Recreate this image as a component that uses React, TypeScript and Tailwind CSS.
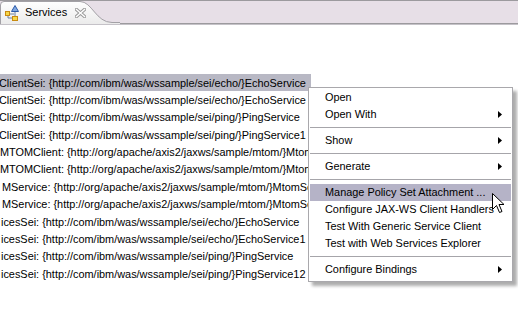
import React from 'react'

const rows = [
  { text: 'ClientSei: {http://com/ibm/was/wssample/sei/echo/}EchoService', offset: '-ml-[1px]', selected: true },
  { text: 'ClientSei: {http://com/ibm/was/wssample/sei/echo/}EchoService', offset: '-ml-[1px]' },
  { text: 'ClientSei: {http://com/ibm/was/wssample/sei/ping/}PingService', offset: '-ml-[1px]' },
  { text: 'ClientSei: {http://com/ibm/was/wssample/sei/ping/}PingService1', offset: '-ml-[1px]' },
  { text: 'MTOMClient: {http://org/apache/axis2/jaxws/sample/mtom/}MtomService', offset: 'ml-0' },
  { text: 'MTOMClient: {http://org/apache/axis2/jaxws/sample/mtom/}MtomService', offset: 'ml-0' },
  { text: 'MService: {http://org/apache/axis2/jaxws/sample/mtom/}MtomService', offset: 'ml-[2px]' },
  { text: 'MService: {http://org/apache/axis2/jaxws/sample/mtom/}MtomService', offset: 'ml-[2px]' },
  { text: 'icesSei: {http://com/ibm/was/wssample/sei/echo/}EchoService', offset: 'ml-[1px]' },
  { text: 'icesSei: {http://com/ibm/was/wssample/sei/echo/}EchoService1', offset: 'ml-[1px]' },
  { text: 'icesSei: {http://com/ibm/was/wssample/sei/ping/}PingService', offset: 'ml-[1px]' },
  { text: 'icesSei: {http://com/ibm/was/wssample/sei/ping/}PingService12', offset: 'ml-[1px]' },
]

type MenuEntry = { label: string; sub?: boolean; hover?: boolean } | 'sep'

const menu: MenuEntry[] = [
  { label: 'Open' },
  { label: 'Open With', sub: true },
  'sep',
  { label: 'Show', sub: true },
  'sep',
  { label: 'Generate', sub: true },
  'sep',
  { label: 'Manage Policy Set Attachment ...', hover: true },
  { label: 'Configure JAX-WS Client Handlers' },
  { label: 'Test With Generic Service Client' },
  { label: 'Test with Web Services Explorer' },
  'sep',
  { label: 'Configure Bindings', sub: true },
]

const ServicesIcon = () => (
  <svg width="16" height="16" viewBox="0 0 16 16" className="flex-shrink-0">
    <path d="M4 8 V13 H9 M4 9 H10 M11 4 V12" stroke="#6b7f9c" strokeWidth="1" fill="none" />
    <rect x="1.5" y="6.5" width="4" height="4" fill="#f6d84a" stroke="#c88a10" />
    <rect x="8.5" y="11.5" width="5" height="4" fill="#f6d84a" stroke="#c88a10" />
    <path d="M11 0.5 L14.5 6.5 H7.5 Z" fill="#7fa7e0" stroke="#2b59a8" />
  </svg>
)

const CloseIcon = () => (
  <svg width="11" height="10" viewBox="0 0 11 10" className="flex-shrink-0">
    <path d="M1.5 1.5 L9.5 8.5 M9.5 1.5 L1.5 8.5" stroke="#9a9a9a" strokeWidth="3.4" strokeLinecap="square" />
    <path d="M1.5 1.5 L9.5 8.5 M9.5 1.5 L1.5 8.5" stroke="#ffffff" strokeWidth="1.4" strokeLinecap="square" />
  </svg>
)

const Arrow = () => (
  <svg width="4" height="7" viewBox="0 0 4 7" className="flex-shrink-0">
    <path d="M0 0 L4 3.5 L0 7 Z" fill="#000" />
  </svg>
)

export default function App() {
  return (
    <div
      className="w-[518px] h-[317px] bg-white relative overflow-hidden text-[10.9px] text-black"
      style={{ fontFamily: '"Liberation Sans", Arial, sans-serif' }}
    >
      {/* TAB BAR */}
      <div className="relative h-[24px] bg-[#e7dfe7] border-t border-b border-[#9c9a9e]">
        <svg width="120" height="24" viewBox="0 0 120 24" className="absolute -top-[1px] left-0">
          <defs>
            <linearGradient id="tabg" x1="0" y1="0" x2="0" y2="1">
              <stop offset="0" stopColor="#ffffff" />
              <stop offset="1" stopColor="#ebebeb" />
            </linearGradient>
          </defs>
          <path
            d="M0.5 24 V5 Q0.5 1.5 4 1.5 H80 C92 1.5 96 22.5 112 22.5 H120 V24 Z"
            fill="url(#tabg)"
          />
          <path
            d="M0.5 24 V5 Q0.5 1.5 4 1.5 H80 C92 1.5 96 22.5 112 22.5 H120"
            fill="none"
            stroke="#a3a1a6"
          />
        </svg>
        <div className="relative flex items-center h-full pl-[4px] pt-[1px] text-[11px]">
          <ServicesIcon />
          <span className="ml-[5px]">Services</span>
          <span className="ml-[8px]"><CloseIcon /></span>
        </div>
      </div>
      <div className="h-px bg-[#c5c2c8]" />

      {/* TREE */}
      <div className="pt-[49px]">
        {rows.map((r, i) => (
          <div key={i} className="h-[17.4px] flex items-center whitespace-nowrap">
            <span
              className={`${r.offset} inline-flex items-center h-[17px] pr-[5px] ${r.selected ? 'bg-[#b8b8c4]' : ''}`}
            >
              {r.text}
            </span>
          </div>
        ))}
      </div>

      {/* CONTEXT MENU */}
      <div className="absolute left-[308px] top-[87px] w-[205px] bg-white border border-[#a9a8ac] pt-[1px] pb-[3px] shadow-[4px_4px_3px_rgba(0,0,0,0.32)]">
        {menu.map((m, i) =>
          m === 'sep' ? (
            <div key={i} className="h-[9px] flex items-center px-[1px]">
              <div className="h-px w-full bg-[#a6a5aa]" />
            </div>
          ) : (
            <div
              key={i}
              className={`h-[17px] mx-[1px] flex items-center justify-between pl-[15px] pr-[9px] whitespace-nowrap ${m.hover ? 'bg-[#b5b3c7]' : ''}`}
            >
              <span>{m.label}</span>
              {m.sub && <Arrow />}
            </div>
          )
        )}
      </div>

      {/* MOUSE CURSOR */}
      <svg width="13" height="21" viewBox="0 0 13 21" className="absolute left-[492px] top-[193px]">
        <path
          d="M0.5 0.5 V16.5 L4.5 12.5 L7.5 19.5 L10 18.5 L7 11.5 H12 Z"
          fill="#ffffff"
          stroke="#000000"
          strokeWidth="1"
          strokeLinejoin="miter"
        />
      </svg>
    </div>
  )
}
